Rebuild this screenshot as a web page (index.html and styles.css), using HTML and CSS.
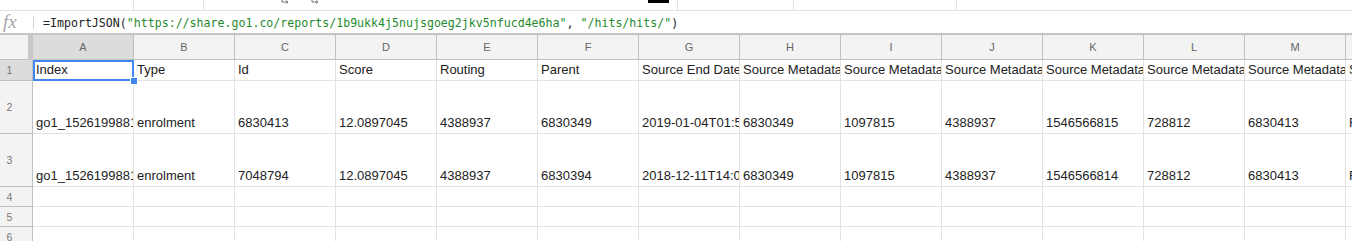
FILE: index.html
```html
<!DOCTYPE html>
<html>
<head>
  <meta charset="UTF-8">
  <title>Sheet - ImportJSON</title>
  <link rel="stylesheet" href="styles.css">
</head>
<body>
  <div class="toolbar">
    <div class="tb-group w1"></div>
    <div class="tb-group w2"></div>
    <div class="tb-group w3">
      <svg class="tb-arrow first" width="8" height="4" viewBox="0 0 8 4"><path d="M1 0v2h6M5 0.5l2 1.5-2 1.5" fill="none" stroke="#777" stroke-width="1"/></svg>
      <svg class="tb-arrow" width="8" height="4" viewBox="0 0 8 4"><path d="M1 0v2h6M5 0.5l2 1.5-2 1.5" fill="none" stroke="#777" stroke-width="1"/></svg>
      <span class="text-color"></span>
    </div>
    <div class="tb-group w4"></div>
    <div class="tb-group w5"></div>
    <div class="tb-group rest"></div>
  </div>

  <div class="formula-bar">
    <span class="fx">fx</span>
    <span class="fx-sep"></span>
    <div class="formula">=ImportJSON(<span class="str">"https://share.go1.co/reports/1b9ukk4j5nujsgoeg2jkv5nfucd4e6ha"</span>, <span class="str">"/hits/hits/"</span>)</div>
  </div>

  <div class="sheet-wrap">
    <div class="sheet" id="sheet"></div>
  </div>

  <script>
    const cols = ['A','B','C','D','E','F','G','H','I','J','K','L','M','N'];
    const rows = [
      ['Index','Type','Id','Score','Routing','Parent','Source End Date','Source Metadata','Source Metadata','Source Metadata','Source Metadata','Source Metadata','Source Metadata','Source Metadata'],
      ['go1_1526199881','enrolment','6830413','12.0897045','4388937','6830349','2019-01-04T01:55:02','6830349','1097815','4388937','1546566815','728812','6830413','FALSE'],
      ['go1_1526199881','enrolment','7048794','12.0897045','4388937','6830394','2018-12-11T14:04:21','6830349','1097815','4388937','1546566814','728812','6830413','FALSE'],
      [], [], []
    ];

    const sheet = document.getElementById('sheet');

    function cell(cls, text) {
      const d = document.createElement('div');
      d.className = cls;
      if (text) d.textContent = text;
      sheet.appendChild(d);
      return d;
    }

    cell('corner');
    cols.forEach((c, i) => cell('col-head' + (i === 0 ? ' sel' : ''), c));

    rows.forEach((r, ri) => {
      cell('row-head' + (ri === 0 ? ' sel' : ''), String(ri + 1));
      cols.forEach((c, ci) => {
        const d = cell('cell', r[ci] || '');
        if (ri === 0 && ci === 0) d.classList.add('active');
      });
    });
  </script>
</body>
</html>
```

FILE: styles.css
```css
body {
  margin: 0;
  font-family: "Liberation Sans", Arial, sans-serif;
  background: #fff;
  color: #222;
  overflow: hidden;
}

/* toolbar strip (only its bottom edge is visible) */
.toolbar {
  display: flex;
  height: 10px;
  border-bottom: 1px solid #e2e2e2;
}

.tb-group {
  height: 10px;
  border-right: 1px solid #e2e2e2;
  box-sizing: border-box;
  display: flex;
  align-items: flex-start;
}

.w1 { width: 134px; }
.w2 { width: 70px; }
.w3 { width: 474px; }
.w4 { width: 116px; }
.w5 { width: 163px; }
.rest { flex: 1; border-right: none; }

.tb-arrow { display: block; margin-left: 22px; }
.tb-arrow.first { margin-left: 77px; }

.text-color {
  width: 21px;
  height: 3px;
  background: #000;
  margin-left: auto;
  margin-right: 8px;
}

/* formula bar */
.formula-bar {
  display: flex;
  align-items: center;
  height: 22px;
  border-bottom: 2px solid #c4c4c4;
}

.fx {
  width: 30px;
  padding-left: 3px;
  box-sizing: border-box;
  font-family: "Liberation Serif", serif;
  font-style: italic;
  font-size: 19px;
  color: #a8a8a8;
  line-height: 22px;
}

.fx-sep {
  width: 1px;
  height: 13px;
  background: #d4d4d4;
  margin-left: 3px;
}

.formula {
  margin-left: 9px;
  font-family: "DejaVu Sans Mono", monospace;
  font-size: 11.6px;
  color: #222;
  white-space: nowrap;
  padding-top: 2px;
}

.formula .str { color: #1f8a2e; }

/* grid */
.sheet-wrap {
  overflow: hidden;
}

.sheet {
  display: grid;
  grid-template-columns: 33px repeat(14, 101px);
  grid-template-rows: 25px 21px 53px 53px 20px 20px 20px;
  width: max-content;
}

.sheet > div {
  box-sizing: border-box;
  border-right: 1px solid #e2e2e2;
  border-bottom: 1px solid #e2e2e2;
  overflow: hidden;
  white-space: nowrap;
}

.corner {
  background: #f3f3f3;
  border-right: 5px solid #c8c8c8 !important;
  border-bottom-color: #c0c0c0 !important;
}

.col-head {
  background: #f3f3f3;
  border-color: #c0c0c0 !important;
  color: #666;
  font-size: 11px;
  display: flex;
  align-items: center;
  justify-content: center;
}

.row-head {
  background: #f3f3f3;
  border-color: #c0c0c0 !important;
  color: #777;
  font-size: 10.5px;
  display: flex;
  align-items: center;
  justify-content: center;
  padding-right: 13px;
}

.col-head.sel,
.row-head.sel {
  background: #dcdcdc;
}

.cell {
  font-size: 13px;
  line-height: 16px;
  color: #222;
  padding: 0 3px 2px;
  display: flex;
  align-items: flex-end;
}

.cell.active {
  position: relative;
  overflow: visible !important;
}

.cell.active::before {
  content: "";
  position: absolute;
  left: 0;
  top: 0;
  right: -1px;
  bottom: -1px;
  border: 2px solid #4285f4;
}

.cell.active::after {
  content: "";
  position: absolute;
  right: -5px;
  bottom: -5px;
  width: 6px;
  height: 6px;
  background: #4285f4;
  border: 1px solid #fff;
  z-index: 2;
}
```
